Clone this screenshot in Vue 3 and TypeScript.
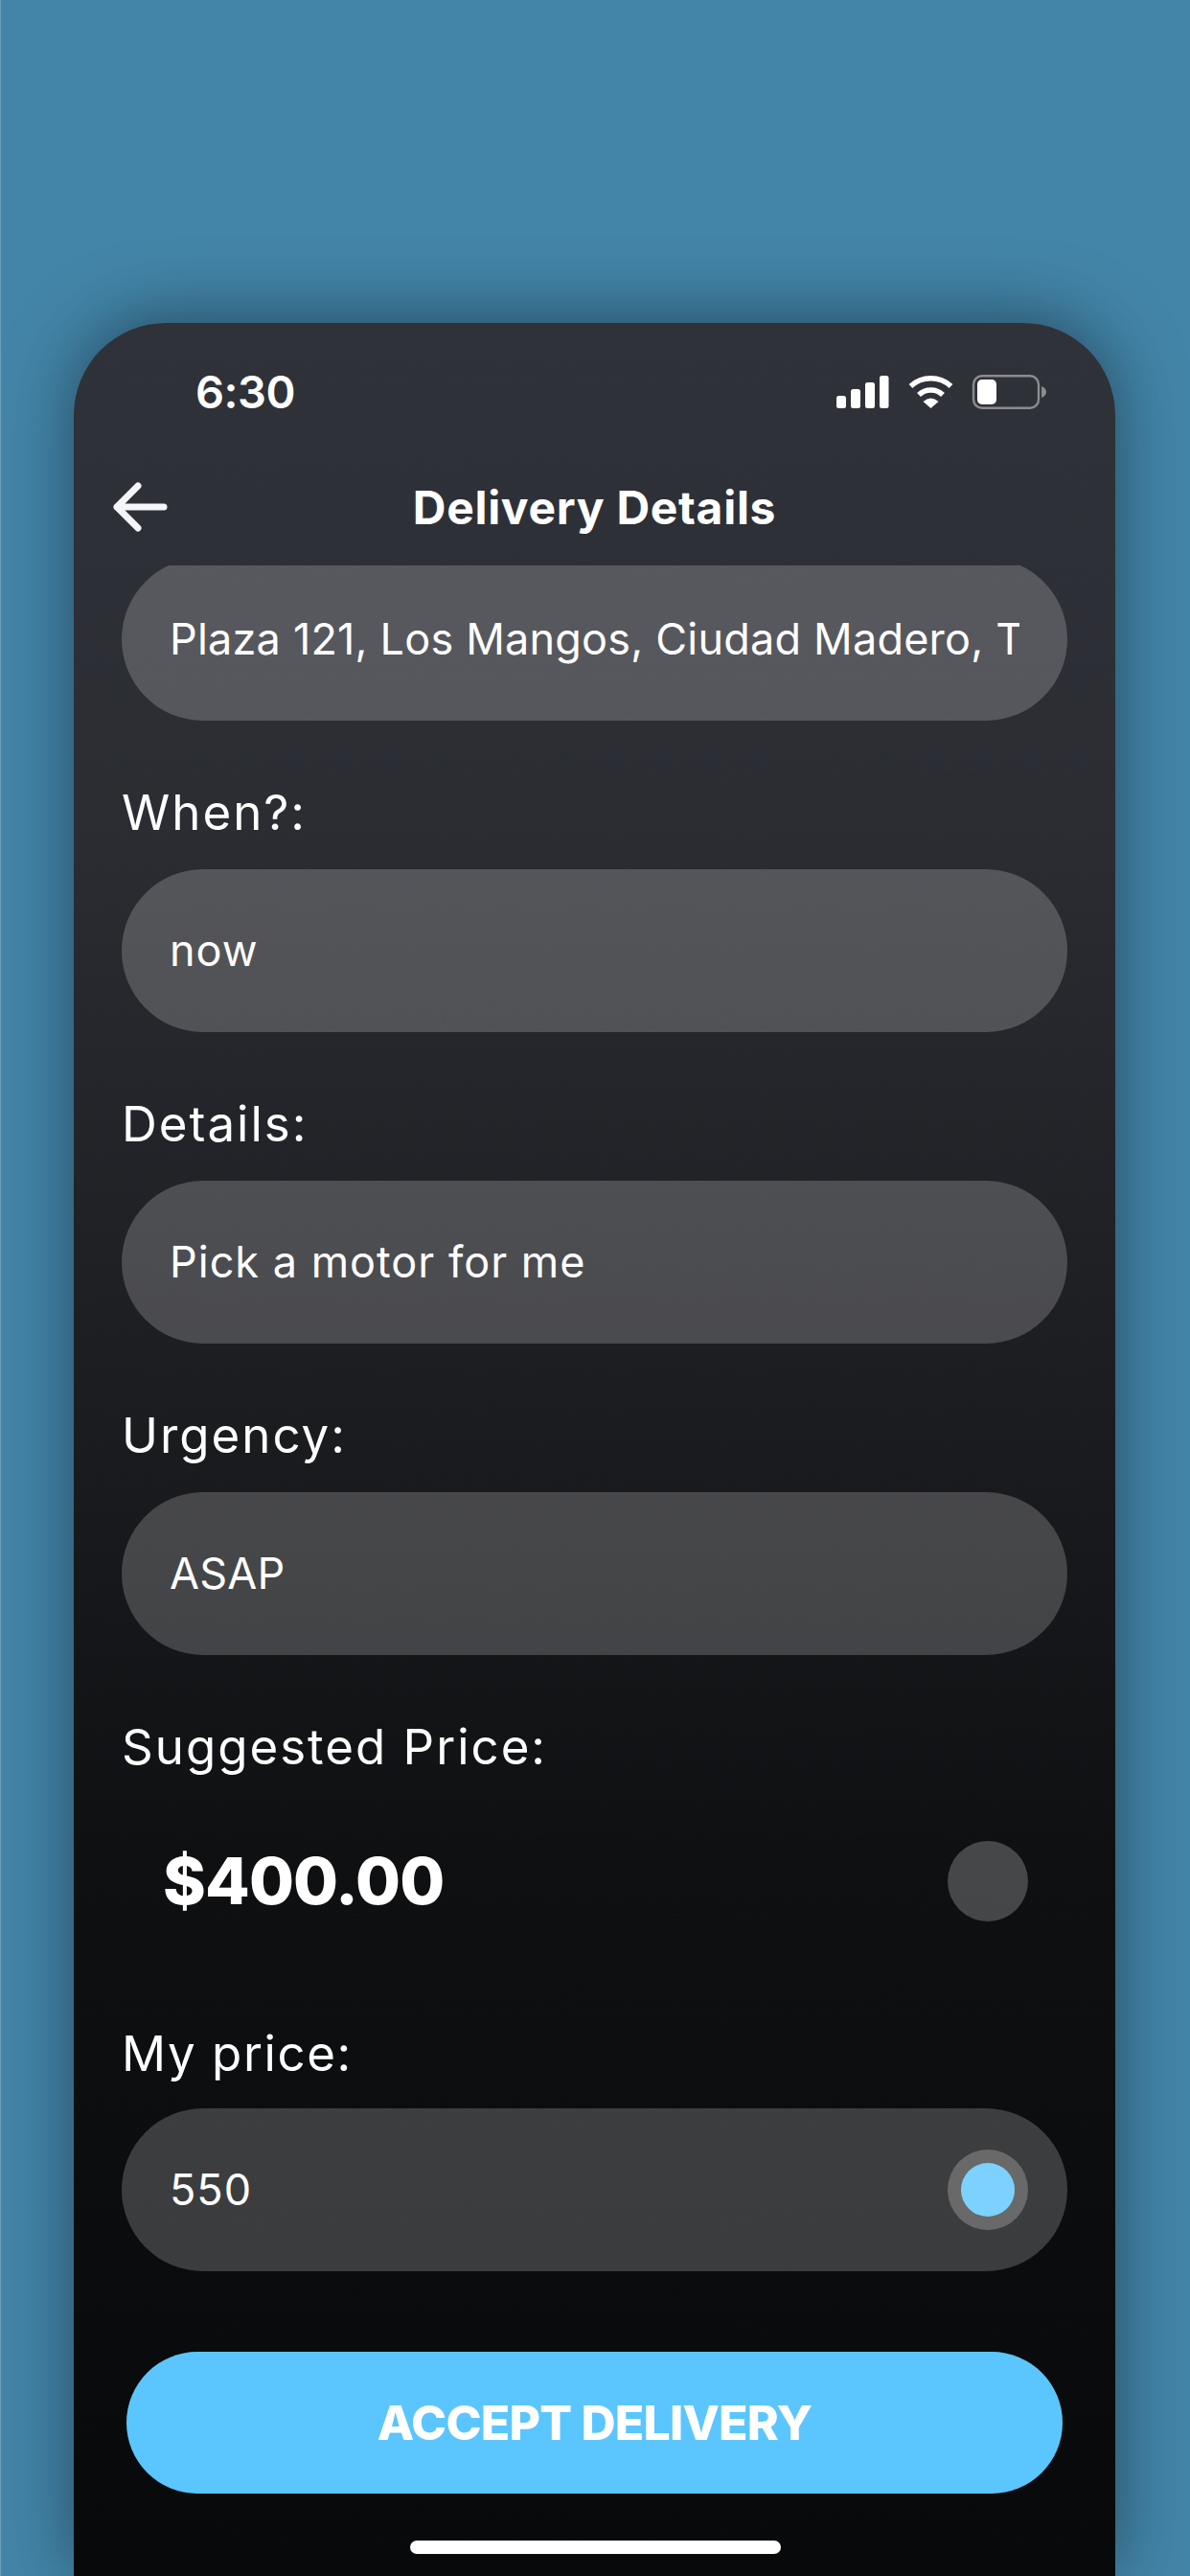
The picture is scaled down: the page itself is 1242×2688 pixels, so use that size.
<script setup lang="ts">
interface Field {
  label: string
  value: string
  compact?: boolean
}

const fields: Field[] = [
  { label: 'When?:', value: 'now' },
  { label: 'Details:', value: 'Pick a motor for me' },
  { label: 'Urgency:', value: 'ASAP', compact: true },
]
</script>

<template>
  <div class="page">
    <main class="phone">
      <header class="status">
        <span class="time">6:30</span>
        <svg class="status-icons" width="219" height="36" viewBox="0 0 219 36" aria-hidden="true">
          <g fill="#fff">
            <rect x="0" y="22" width="10" height="13" rx="2.5" />
            <rect x="15" y="15" width="10" height="20" rx="2.5" />
            <rect x="30" y="8" width="10" height="27" rx="2.5" />
            <rect x="45" y="1" width="9.5" height="34" rx="2.5" />
            <path d="M90.5 28 Q98.5 21 106.5 28 L98.5 35 Z" />
          </g>
          <g fill="none" stroke="#fff" stroke-width="5.5">
            <path d="M77.5 12 A31 31 0 0 1 119.5 12" />
            <path d="M86 21 A18 18 0 0 1 111 21" />
          </g>
          <rect x="143" y="1.2" width="68" height="33.6" rx="9" fill="none" stroke="#8b8c8e" stroke-width="2.4" />
          <rect x="147" y="5" width="20" height="26" rx="5" fill="#fff" />
          <path d="M214 12 Q219 14 219 18 Q219 22 214 24 Z" fill="#8b8c8e" />
        </svg>
      </header>

      <nav class="title-bar">
        <svg class="back" width="60" height="54" viewBox="0 0 60 54" aria-hidden="true">
          <path d="M5 27 H54 M27 5 L5 27 L27 49" fill="none" stroke="#f4f5f8" stroke-width="7" stroke-linecap="round" stroke-linejoin="round" />
        </svg>
        <h1 class="title">Delivery Details</h1>
      </nav>

      <section class="form">
        <div class="pill first">
          <span class="clip compact">Plaza 121, Los Mangos, Ciudad Madero, Tamaulipas</span>
        </div>

        <template v-for="field in fields" :key="field.label">
          <label class="label">{{ field.label }}</label>
          <div class="pill">
            <span class="clip" :class="{ compact: field.compact }">{{ field.value }}</span>
          </div>
        </template>

        <label class="label">Suggested Price:</label>
        <div class="suggested">
          <span class="amount">$400.00</span>
          <span class="radio"></span>
        </div>

        <label class="label my-price">My price:</label>
        <div class="pill with-radio">
          <span class="clip">550</span>
          <span class="radio selected"><span class="dot"></span></span>
        </div>

        <button class="accept" type="button">ACCEPT DELIVERY</button>
      </section>

      <div class="home-bar"></div>
    </main>
  </div>
</template>

<style scoped>
.page {
  width: 1242px;
  height: 2688px;
  box-sizing: border-box;
  padding: 337px 0 0 76px;
  background: #4385a8;
  border-left: 1px solid #699fb9;
  overflow: hidden;
  font-family: Inter, "Noto Sans", sans-serif;
  color: #fff;
}

.phone {
  width: 1087px;
  height: 2351px;
  border-radius: 96px 96px 0 0;
  background: linear-gradient(180deg, #2f3239 0%, #2b2d33 22%, #0f1012 68%, #08090b 100%);
  box-shadow: 0 -6px 70px rgba(10, 20, 30, 0.5);
  display: flex;
  flex-direction: column;
  align-items: stretch;
}

.status {
  height: 133px;
  box-sizing: border-box;
  padding: 36px 72px 25px 127px;
  display: flex;
  justify-content: space-between;
  align-items: flex-start;
}

.time {
  font-size: 47px;
  font-weight: 600;
  line-height: 72px;
  letter-spacing: -0.5px;
}

.status-icons {
  margin-top: 18px;
}

.title-bar {
  height: 120px;
  flex: none;
  position: relative;
  display: flex;
  align-items: center;
  justify-content: center;
}

.back {
  position: absolute;
  left: 40px;
  top: 32px;
}

.title {
  margin: 0;
  font-size: 48px;
  font-weight: 700;
  letter-spacing: 0.7px;
  line-height: 60px;
}

.form {
  flex: 1;
  min-height: 0;
  padding: 0 50px;
  overflow: hidden;
  display: flex;
  flex-direction: column;
}

.pill {
  flex: none;
  height: 170px;
  box-sizing: border-box;
  padding: 0 50px;
  border-radius: 85px;
  background: rgba(255, 255, 255, 0.2);
  display: flex;
  align-items: center;
  justify-content: space-between;
  font-size: 45px;
  font-weight: 400;
  letter-spacing: 1px;
}

.pill.first {
  margin-top: -8px;
}

.clip {
  flex: 1;
  min-width: 0;
  white-space: nowrap;
  overflow: hidden;
  line-height: 70px;
}

.clip.compact {
  letter-spacing: 0.2px;
}

.label {
  display: block;
  margin: 66px 0 29px;
  font-size: 51px;
  font-weight: 400;
  line-height: 60px;
  letter-spacing: 2px;
}

.suggested {
  flex: none;
  height: 84px;
  margin-top: 39px;
  display: flex;
  align-items: center;
  justify-content: space-between;
  padding: 0 41px 0 43px;
}

.amount {
  font-size: 68px;
  font-weight: 800;
  letter-spacing: -0.9px;
  line-height: 84px;
  margin-top: -2px;
}

.radio {
  flex: none;
  width: 84px;
  height: 84px;
  border-radius: 50%;
  background: rgba(255, 255, 255, 0.23);
  display: flex;
  align-items: center;
  justify-content: center;
}

.with-radio {
  padding-right: 41px;
}

.radio.selected {
  background: #69696a;
}

.dot {
  width: 56px;
  height: 56px;
  border-radius: 50%;
  background: #7dd1ff;
}

.label.my-price {
  margin: 108px 0 27px;
  letter-spacing: 1.6px;
}

.accept {
  flex: none;
  margin: 84px 5px 0;
  height: 148px;
  border: none;
  border-radius: 74px;
  background: #5bc6fd;
  color: #fff;
  font-family: inherit;
  font-size: 50px;
  font-weight: 800;
  letter-spacing: -0.8px;
}

.home-bar {
  position: absolute;
  top: 2651px;
  left: 428px;
  width: 387px;
  height: 14px;
  border-radius: 7px;
  background: #fff;
}
</style>

<style>
html,
body {
  margin: 0;
  background: #4385a8;
}
</style>
